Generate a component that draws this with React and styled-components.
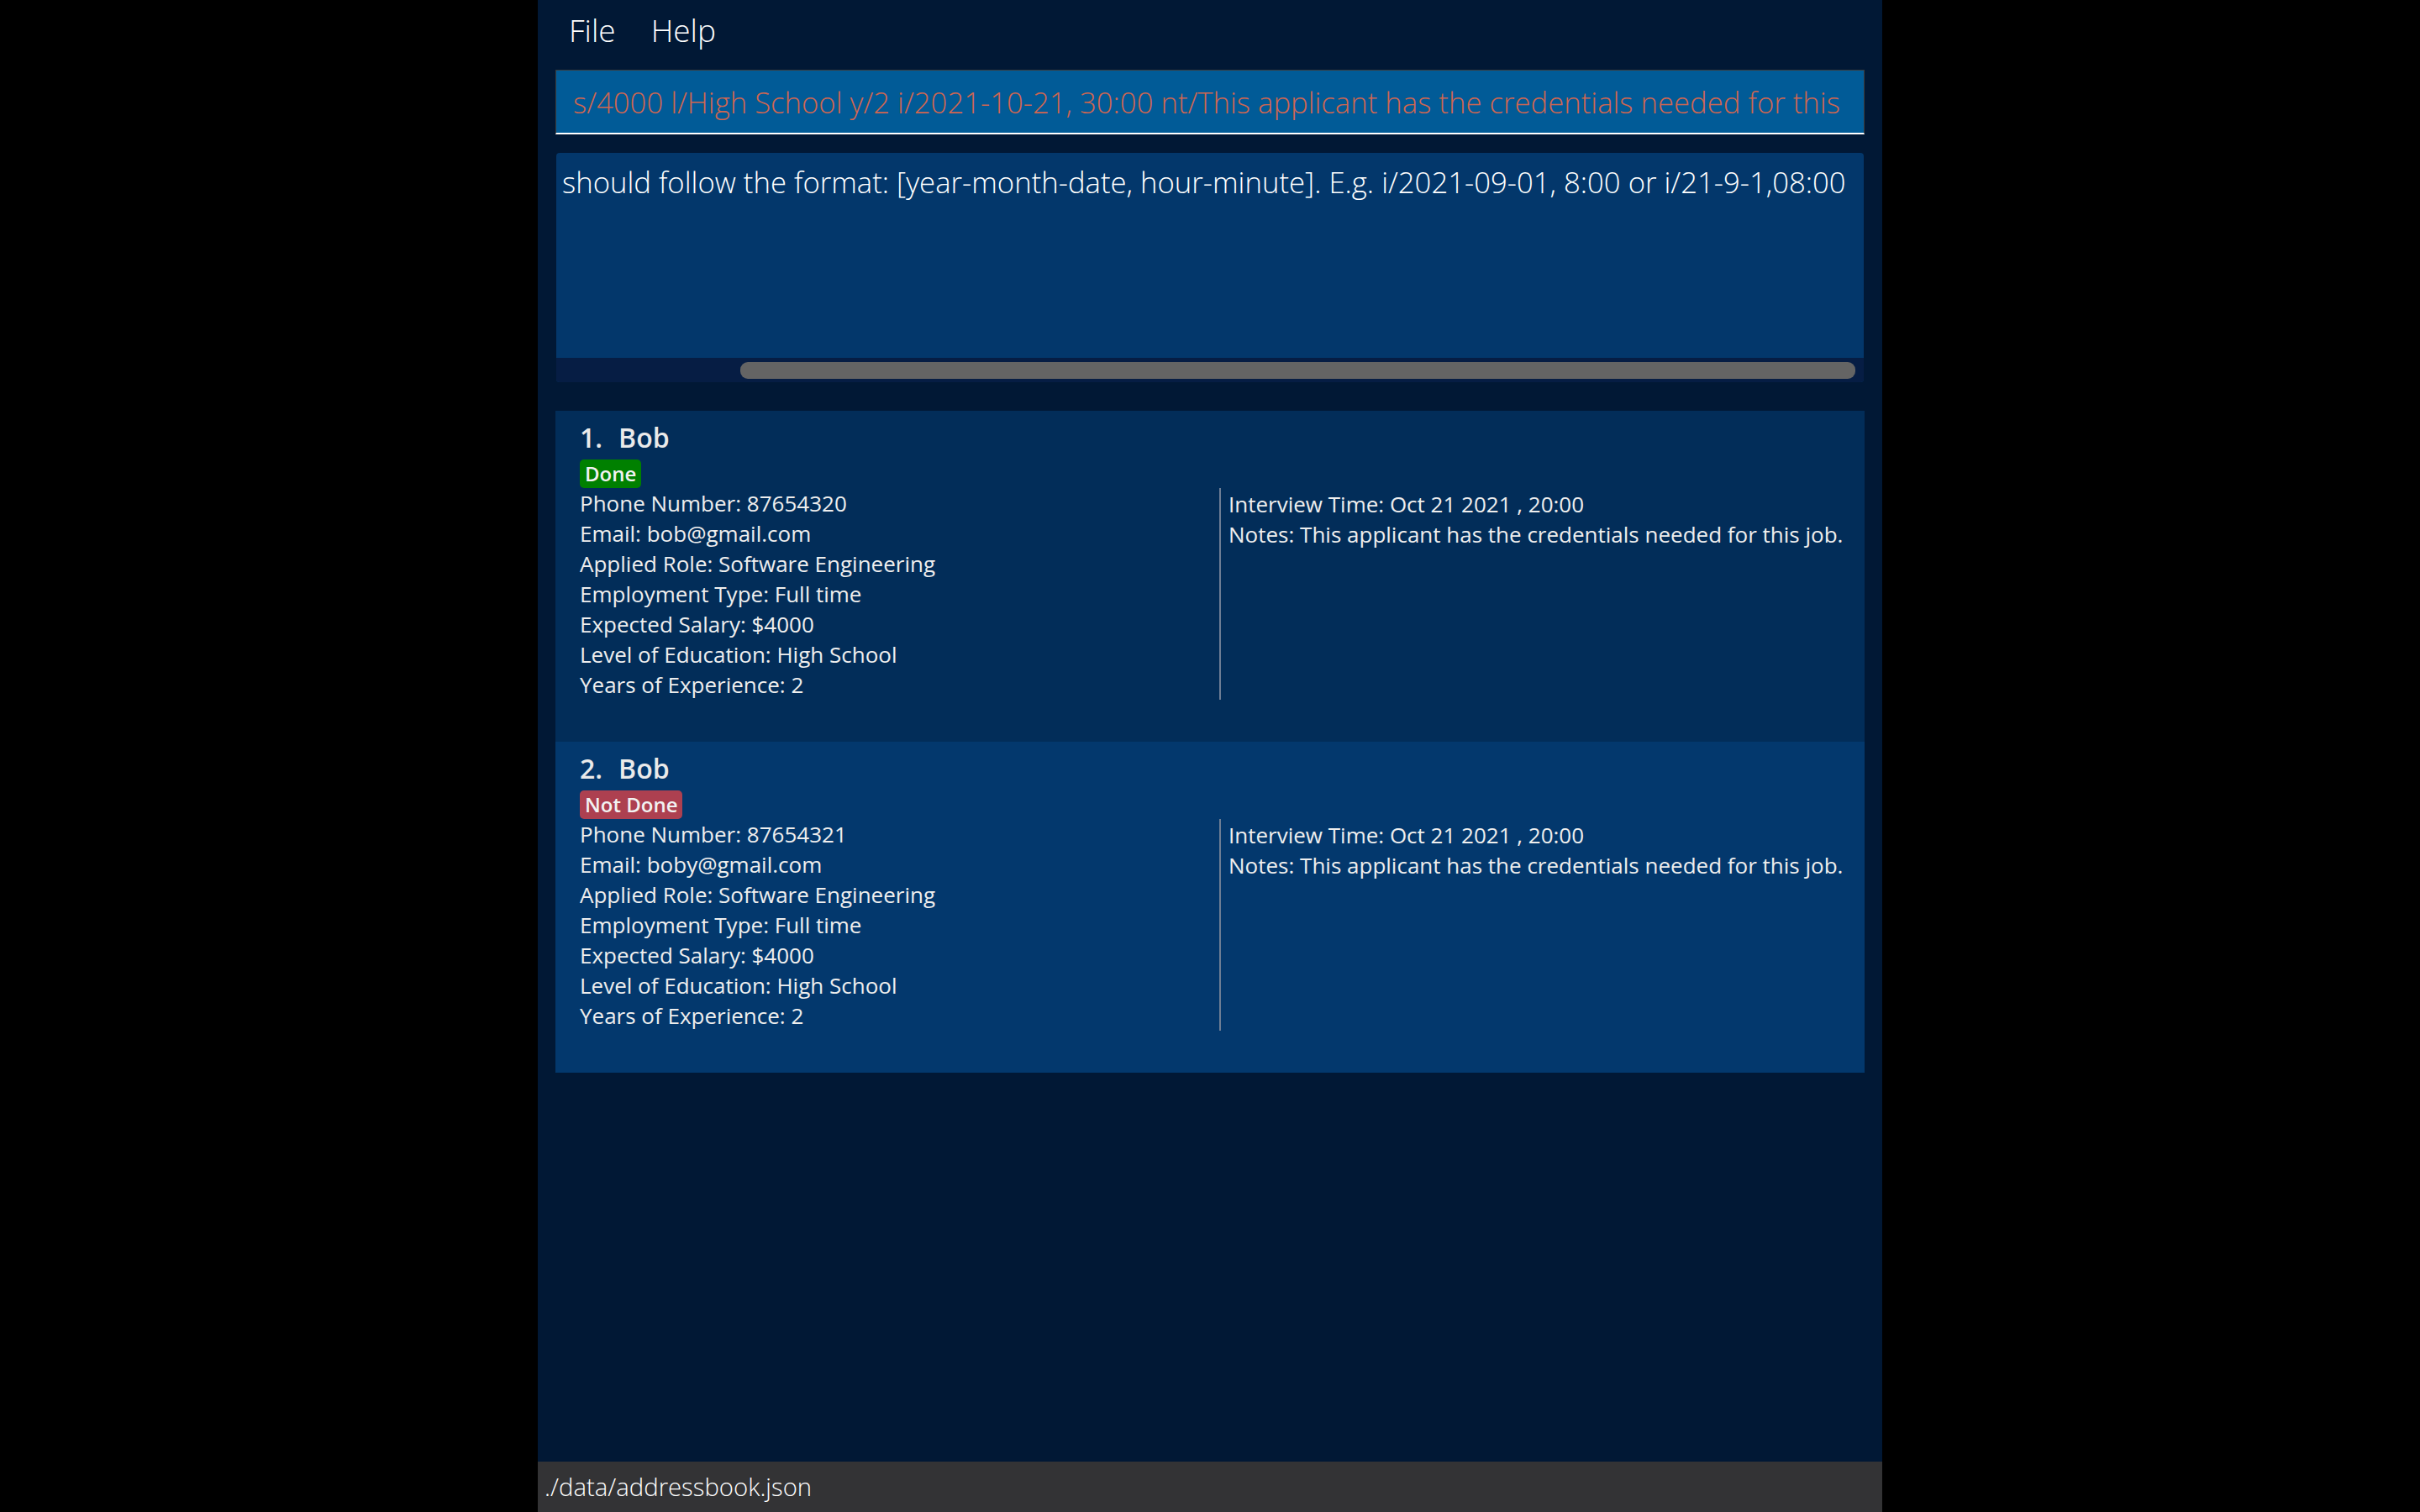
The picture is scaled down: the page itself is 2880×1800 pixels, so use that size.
import styled, { createGlobalStyle } from "styled-components";

const GlobalStyle = createGlobalStyle`
  html, body {
    margin: 0;
    padding: 0;
    background: #000;
    font-family: "Open Sans", "Liberation Sans", sans-serif;
  }
`;

const Window = styled.div`
  width: 1600px;
  height: 1800px;
  margin: 0 auto;
  background: #011835;
  display: flex;
  flex-direction: column;
  color: #f0f0f0;
`;

const MenuBar = styled.div`
  height: 72px;
  display: flex;
  align-items: center;
  padding-left: 16px;
  box-sizing: border-box;
`;

const MenuItem = styled.div`
  padding: 0 21px;
  font-size: 37px;
  font-weight: 300;
  color: #ffffff;
  margin-top: -2px;
`;

const CommandPane = styled.div`
  padding: 11px 21px 0 21px;
`;

const CommandBox = styled.div`
  height: 77px;
  box-sizing: border-box;
  background: #015b97;
  border: 1px solid #3c3c3c;
  border-bottom: 2px solid #ffffff;
  display: flex;
  align-items: center;
  padding-left: 20px;
  overflow: hidden;
  white-space: nowrap;
  font-size: 34.7px;
  font-weight: 300;
  color: #d06651;
`;

const ResultPane = styled.div`
  padding: 22px 22px 0 22px;
`;

const ResultBox = styled.div`
  background: #03376b;
  border-radius: 4px;
  overflow: hidden;
`;

const ResultText = styled.div`
  height: 244px;
  box-sizing: border-box;
  padding: 11px 0 0 7px;
  white-space: nowrap;
  overflow: hidden;
  font-size: 34.7px;
  font-weight: 300;
  color: #ffffff;
`;

const ScrollTrack = styled.div`
  height: 29px;
  background: #061d44;
  display: flex;
  align-items: center;
  padding: 0 10px 0 219px;
`;

const ScrollThumb = styled.div`
  flex: 1;
  height: 20px;
  border-radius: 9px;
  background: #646464;
`;

const ListPane = styled.div`
  flex: 1;
  padding: 34px 21px 0 21px;
  display: flex;
  flex-direction: column;
`;

const Card = styled.div`
  background: ${(p) => (p.$odd ? "#03386d" : "#022d59")};
  padding: 9px 29px 50px 29px;
`;

const Title = styled.div`
  display: flex;
  gap: 19px;
  height: 44px;
  align-items: center;
  font-size: 32px;
  font-weight: 600;
  color: #eaeaea;
`;

const Badge = styled.span`
  display: inline-block;
  margin-top: 5px;
  height: 34px;
  line-height: 34px;
  padding: 0 6px;
  border-radius: 5px;
  font-size: 24px;
  font-weight: 600;
  color: #f2f2f2;
  background: ${(p) => (p.$done ? "#008000" : "#ad4050")};
`;

const Details = styled.div`
  display: grid;
  grid-template-columns: 761px 1fr;
`;

const Column = styled.div`
  display: flex;
  flex-direction: column;
  ${(p) => p.$divider && "border-left: 2px solid #6d7d94; padding-left: 9px;"}
`;

const Line = styled.div`
  font-size: 26px;
  line-height: 36px;
  color: #eeeeee;
  white-space: nowrap;
  margin-top: ${(p) => (p.$first ? "1px" : "0")};
`;

const StatusBar = styled.div`
  height: 60px;
  background: #333335;
  display: flex;
  align-items: center;
  padding-left: 8px;
  font-size: 29.3px;
  font-weight: 300;
  color: #ffffff;
`;

const applicants = [
  {
    id: 1,
    name: "Bob",
    done: true,
    phone: "87654320",
    email: "bob@gmail.com",
  },
  {
    id: 2,
    name: "Bob",
    done: false,
    phone: "87654321",
    email: "boby@gmail.com",
  },
];

const ApplicantCard = ({ a, odd }) => (
  <Card $odd={odd}>
    <Title>
      <span>{a.id}.</span>
      <span>{a.name}</span>
    </Title>
    <div>
      <Badge $done={a.done}>{a.done ? "Done" : "Not Done"}</Badge>
    </div>
    <Details>
      <Column>
        <Line>Phone Number: {a.phone}</Line>
        <Line>Email: {a.email}</Line>
        <Line>Applied Role: Software Engineering</Line>
        <Line>Employment Type: Full time</Line>
        <Line>Expected Salary: $4000</Line>
        <Line>Level of Education: High School</Line>
        <Line>Years of Experience: 2</Line>
      </Column>
      <Column $divider>
        <Line $first>Interview Time: Oct 21 2021 , 20:00</Line>
        <Line>Notes: This applicant has the credentials needed for this job.</Line>
      </Column>
    </Details>
  </Card>
);

export default function App() {
  return (
    <>
      <GlobalStyle />
      <Window>
        <MenuBar>
          <MenuItem>File</MenuItem>
          <MenuItem>Help</MenuItem>
        </MenuBar>
        <CommandPane>
          <CommandBox>
            s/4000 l/High School y/2 i/2021-10-21, 30:00 nt/This applicant has the credentials needed for this
          </CommandBox>
        </CommandPane>
        <ResultPane>
          <ResultBox>
            <ResultText>
              should follow the format: [year-month-date, hour-minute]. E.g. i/2021-09-01, 8:00 or i/21-9-1,08:00
            </ResultText>
            <ScrollTrack>
              <ScrollThumb />
            </ScrollTrack>
          </ResultBox>
        </ResultPane>
        <ListPane>
          {applicants.map((a, i) => (
            <ApplicantCard key={a.id} a={a} odd={i % 2 === 1} />
          ))}
        </ListPane>
        <StatusBar>./data/addressbook.json</StatusBar>
      </Window>
    </>
  );
}
